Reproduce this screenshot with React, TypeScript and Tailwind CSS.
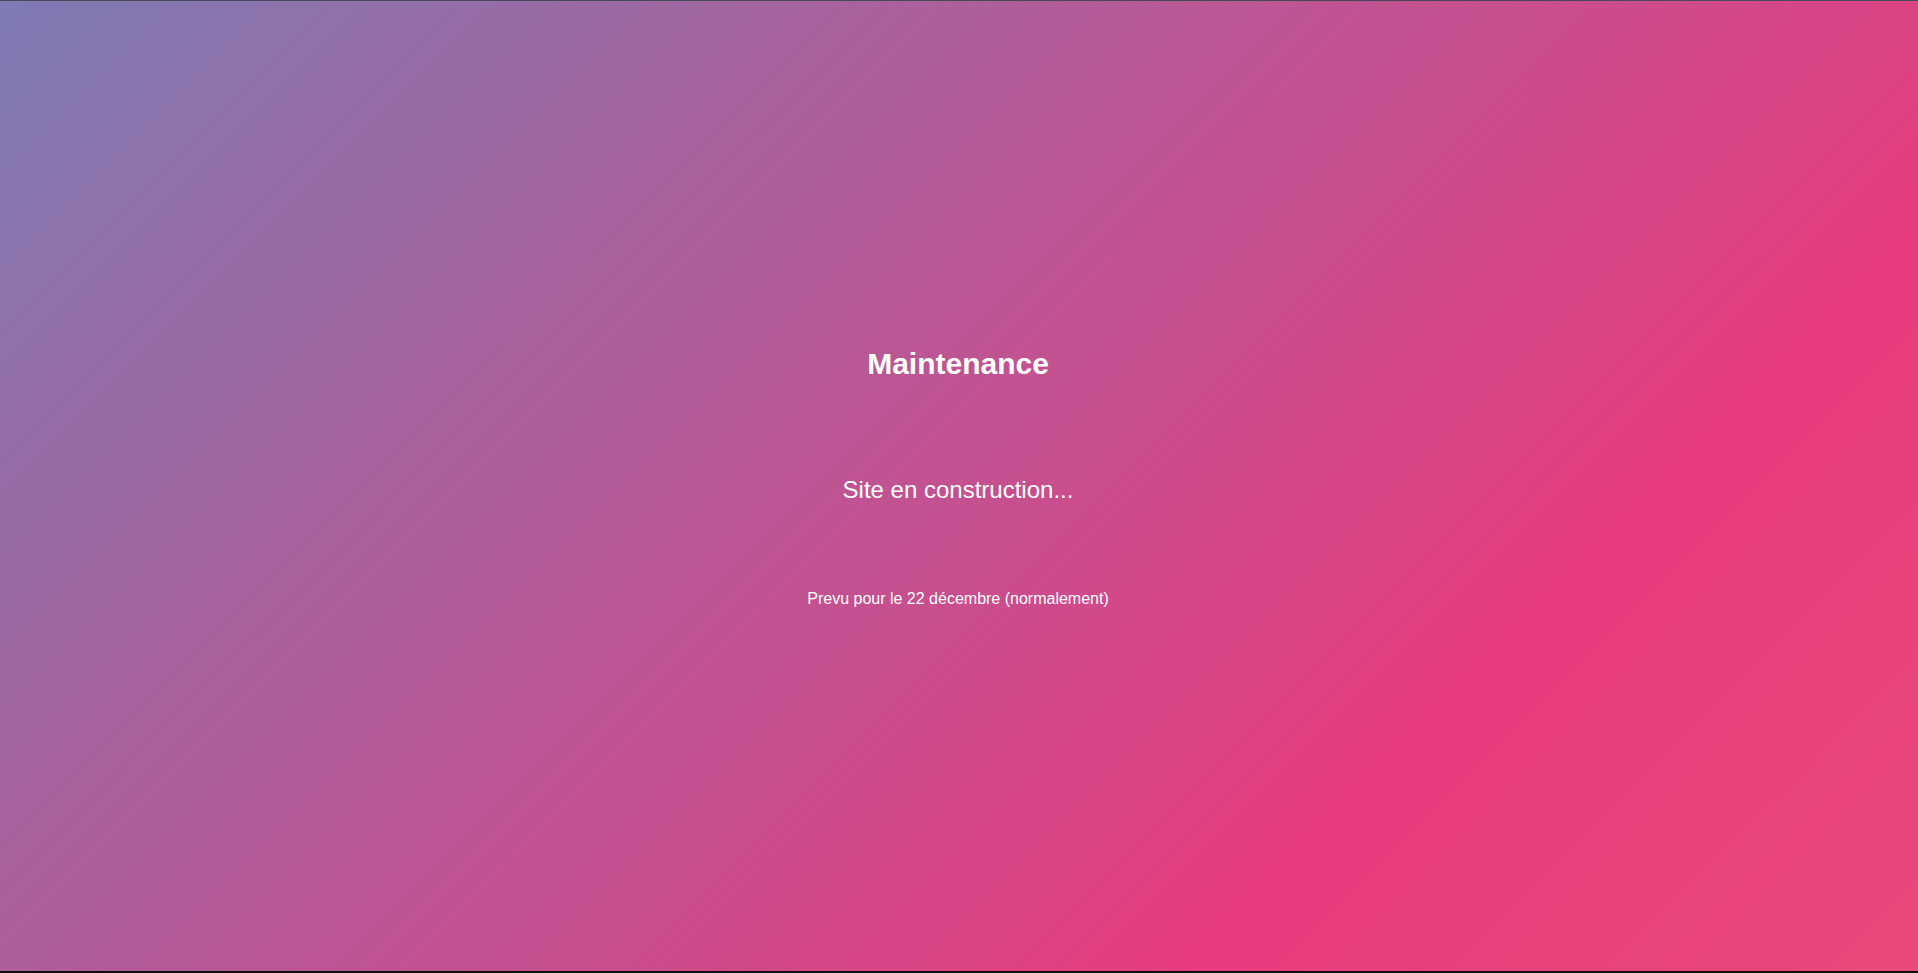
export default function App() {
  return (
    <main className="flex h-screen w-full flex-col items-center border-t border-b-2 border-t-[#454a55] border-b-[#0d0d0d] bg-[linear-gradient(-45deg,#e9497a_0%,#e73c7e_25%,#7e7bb3_100%)] pt-[346px] pr-[2px] font-['Liberation_Sans',Arial,sans-serif] text-white">
      <h1 className="text-[30px] leading-[34px] font-bold">Maintenance</h1>
      <p className="mt-[95px] text-[24px] leading-[28px]">Site en construction...</p>
      <p className="mt-[86px] text-[16px] leading-[18px]">
        Prevu pour le 22 décembre (normalement)
      </p>
    </main>
  );
}
